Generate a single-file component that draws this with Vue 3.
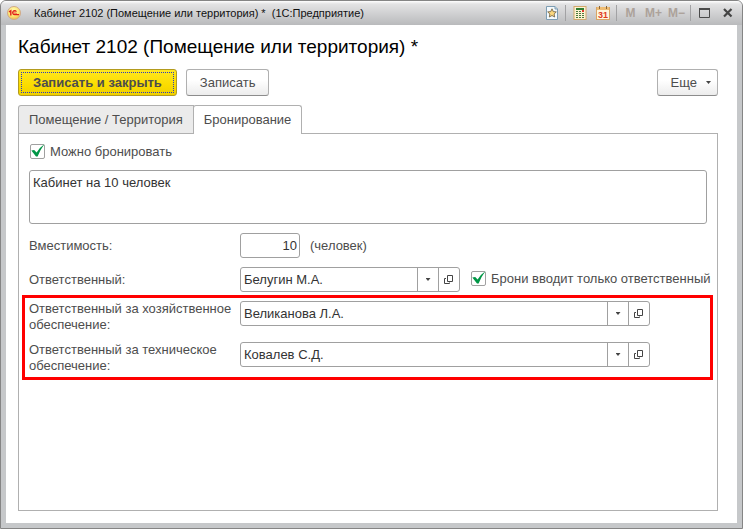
<script setup>
import { ref } from 'vue'

const canBook = ref(true)
const onlyResponsible = ref(true)
const description = ref('Кабинет на 10 человек')
const capacity = ref('10')
const responsible = ref('Белугин М.А.')
const extra = ref([
  { id: 'household', label: 'Ответственный за хозяйственное обеспечение:', value: 'Великанова Л.А.' },
  { id: 'technical', label: 'Ответственный за техническое обеспечение:', value: 'Ковалев С.Д.' },
])
</script>

<template>
  <div class="window">
    <header class="titlebar">
      <svg class="logo" width="14" height="14" viewBox="0 0 14 14" aria-hidden="true">
        <defs>
          <radialGradient id="logoFill" cx="0.45" cy="0.3" r="0.75">
            <stop offset="0" stop-color="#fffbb0" />
            <stop offset="0.6" stop-color="#fde570" />
            <stop offset="1" stop-color="#eab04c" />
          </radialGradient>
        </defs>
        <circle cx="7" cy="7" r="6.5" fill="url(#logoFill)" stroke="#d0a98a" />
        <path d="M2 5.8 L3.8 4.8 V9.4" fill="none" stroke="#e0201b" stroke-width="1.4" />
        <path d="M9.4 5.7 A2 2 0 1 0 7.6 8.7 H12" fill="none" stroke="#e0201b" stroke-width="1.2" />
        <path d="M8.4 6.4 A0.8 0.8 0 1 0 7.8 7.3 H10" fill="none" stroke="#e0201b" stroke-width="0.6" />
      </svg>
      <span class="caption">Кабинет 2102 (Помещение или территория) *&nbsp; (1С:Предприятие)</span>
      <div class="tools">
        <button class="tool" type="button" aria-label="Избранное">
          <svg width="14" height="14" viewBox="0 0 14 14">
            <path d="M1.5 0.5 H10 L12.5 3 V13.5 H1.5 Z" fill="#f4f9fc" stroke="#7d9db3" />
            <path d="M10 0.5 V3 H12.5" fill="#c9dbe6" stroke="#7d9db3" />
            <path d="M7 2.8 L8.3 5.6 L11.3 5.9 L9.1 8 L9.7 11 L7 9.5 L4.3 11 L4.9 8 L2.7 5.9 L5.7 5.6 Z" fill="#fbd77d" stroke="#77684c" stroke-width="0.9" />
          </svg>
        </button>
        <i class="divider"></i>
        <button class="tool" type="button" aria-label="Калькулятор">
          <svg width="14" height="14" viewBox="0 0 14 14">
            <rect x="1" y="0.5" width="12" height="13" fill="#fdf3d3" stroke="#d2a86c" />
            <rect x="3" y="2" width="8" height="2" fill="#2f7d31" />
            <g fill="#4b7a3c">
              <rect x="3" y="5" width="2" height="1" /><rect x="6" y="5" width="2" height="1" />
              <rect x="3" y="7" width="2" height="1" /><rect x="6" y="7" width="2" height="1" /><rect x="9" y="7" width="2" height="1" />
              <rect x="3" y="9" width="2" height="1" /><rect x="6" y="9" width="2" height="1" /><rect x="9" y="9" width="2" height="1" />
              <rect x="3" y="11" width="2" height="1" /><rect x="6" y="11" width="2" height="1" /><rect x="9" y="11" width="2" height="1" />
            </g>
            <rect x="9" y="4" width="2" height="2" fill="#e0392b" />
          </svg>
        </button>
        <button class="tool" type="button" aria-label="Календарь">
          <svg width="14" height="14" viewBox="0 0 14 14">
            <rect x="0.5" y="1.5" width="13" height="12" fill="#fff6df" stroke="#d9a566" />
            <rect x="1" y="1" width="12" height="3" fill="#efbd74" />
            <path d="M3.5 0 V3 M10.5 0 V3" stroke="#8a6437" />
            <text x="7" y="12" text-anchor="middle" font-family="Liberation Sans, sans-serif" font-size="9" font-weight="bold" fill="#e03a1e">31</text>
          </svg>
        </button>
        <i class="divider"></i>
        <button class="memory" type="button">M</button>
        <button class="memory" type="button">M+</button>
        <button class="memory" type="button">M−</button>
        <i class="divider"></i>
        <button class="tool" type="button" aria-label="Развернуть">
          <svg width="12" height="10" viewBox="0 0 12 10">
            <path d="M0.5 0 V9.5 H10.5 V0" fill="none" stroke="#4a4a4a" />
            <rect width="11" height="2" fill="#4a4a4a" />
          </svg>
        </button>
        <button class="tool" type="button" aria-label="Закрыть">
          <svg width="10" height="10" viewBox="0 0 10 10">
            <path d="M1 1 L8.5 8.5 M8.5 1 L1 8.5" stroke="#444" stroke-width="2.2" />
          </svg>
        </button>
      </div>
    </header>

    <main class="content">
      <h1>Кабинет 2102 (Помещение или территория) *</h1>
      <div class="commands">
        <button class="btn primary" type="button">Записать и закрыть</button>
        <button class="btn" type="button">Записать</button>
        <button class="btn more" type="button">Еще <i class="caret"></i></button>
      </div>

      <div class="tabs" role="tablist">
        <button class="tab" type="button" role="tab" aria-selected="false">Помещение / Территория</button>
        <button class="tab active" type="button" role="tab" aria-selected="true">Бронирование</button>
      </div>

      <section class="panel" role="tabpanel">
        <label class="check">
          <span class="box">
            <input v-model="canBook" type="checkbox" />
            <svg v-if="canBook" width="15" height="15" viewBox="0 0 15 15"><path d="M1.3 6.6 L4.2 6 L6.6 8.6 Q9.5 3.5 14.5 0 Q10 6 7.6 12.6 H6 Z" fill="#009646" /></svg>
          </span>
          Можно бронировать
        </label>
        <textarea v-model="description" aria-label="Описание"></textarea>

        <div class="row">
          <label class="name" for="capacity">Вместимость:</label>
          <input id="capacity" v-model="capacity" class="number" type="text" />
          <span class="unit">(человек)</span>
        </div>

        <div class="row">
          <label class="name" for="responsible">Ответственный:</label>
          <div class="field short">
            <input id="responsible" v-model="responsible" type="text" />
            <button type="button" aria-label="Выбрать"><i class="caret"></i></button>
            <button type="button" aria-label="Открыть">
              <svg width="10" height="10" viewBox="0 0 10 10"><path d="M3.5 0.5 H8.5 V6.5 H3.5 Z M2 3.5 H0.5 V8.5 H5.5 V7.5" fill="none" stroke="#444" /></svg>
            </button>
          </div>
          <label class="check">
            <span class="box">
              <input v-model="onlyResponsible" type="checkbox" />
              <svg v-if="onlyResponsible" width="15" height="15" viewBox="0 0 15 15"><path d="M1.3 6.6 L4.2 6 L6.6 8.6 Q9.5 3.5 14.5 0 Q10 6 7.6 12.6 H6 Z" fill="#009646" /></svg>
            </span>
            Брони вводит только ответственный
          </label>
        </div>

        <div class="highlighted">
          <div v-for="item in extra" :key="item.id" class="row tall">
            <label class="name" :for="item.id">{{ item.label }}</label>
            <div class="field">
              <input :id="item.id" v-model="item.value" type="text" />
              <button type="button" aria-label="Выбрать"><i class="caret"></i></button>
              <button type="button" aria-label="Открыть">
                <svg width="10" height="10" viewBox="0 0 10 10"><path d="M3.5 0.5 H8.5 V6.5 H3.5 Z M2 3.5 H0.5 V8.5 H5.5 V7.5" fill="none" stroke="#444" /></svg>
              </button>
            </div>
          </div>
        </div>
      </section>
    </main>
  </div>
</template>

<style>
body {
  background: #fff;
}
</style>

<style scoped>
* {
  box-sizing: border-box;
}

button,
input,
textarea {
  margin: 0;
  font: inherit;
  color: inherit;
}

.window {
  display: flex;
  flex-direction: column;
  min-height: 100vh;
  padding: 0 5px 5px;
  border: 1px solid #858585;
  border-radius: 6px 6px 0 0;
  background: #c6c8ca;
  font-family: "Liberation Sans", Arial, sans-serif;
  font-size: 13px;
  line-height: 16px;
  color: #4d4d4d;
}

.titlebar {
  display: flex;
  align-items: center;
  height: 24px;
  margin: 0 -5px;
  padding: 0 3px 0 6px;
  border-radius: 5px 5px 0 0;
  background: linear-gradient(#fff 0, #e3e3e4 3px, #b9babc 100%);
}

.logo {
  flex: none;
}

.caption {
  margin-left: 13px;
  font-size: 11px;
  color: #111;
  white-space: nowrap;
}

.tools {
  display: flex;
  align-items: center;
  margin-left: auto;
}

.tool,
.memory {
  display: flex;
  align-items: center;
  justify-content: center;
  width: 23px;
  height: 20px;
  padding: 0;
  border: 0;
  background: none;
}

.memory {
  font-size: 12px;
  font-weight: bold;
  color: #aca29a;
}

.divider {
  width: 1px;
  height: 16px;
  margin: 0 2px;
  background: #a2a2a4;
}

.content {
  display: flex;
  flex: 1;
  flex-direction: column;
  padding: 10px 19px 12px 12px;
  background: #fff;
}

h1 {
  margin: 0;
  font-size: 19px;
  font-weight: normal;
  line-height: 24px;
  color: #000;
}

.commands {
  display: flex;
  gap: 9px;
  margin-top: 10px;
}

.btn {
  height: 27px;
  padding: 0 13px;
  border: 1px solid #b0b0b0;
  border-bottom-color: #8c8c8c;
  border-radius: 3px;
  background: linear-gradient(#fff 40%, #ececec);
}

.primary {
  padding: 0 14px;
  border-color: #b39b1e;
  background: linear-gradient(#ffe81f, #fbdc00 60%, #efd000);
  outline: 1px dotted #2a3cc0;
  outline-offset: -4px;
  font-weight: bold;
}

.more {
  display: flex;
  align-items: center;
  gap: 9px;
  margin-left: auto;
  padding: 0 6px 0 13px;
}

.caret {
  width: 5px;
  height: 3px;
  background: #444;
  clip-path: polygon(0 0, 100% 0, 50% 100%);
}

.tabs {
  display: flex;
  margin-top: 9px;
}

.tab {
  height: 28px;
  padding: 0 10px;
  border: 1px solid #b0b0b0;
  border-bottom: 0;
  border-radius: 3px 0 0 0;
  background: #ebebeb;
}

.active {
  height: 29px;
  margin: 0 0 -1px -1px;
  border-radius: 3px 3px 0 0;
  background: #fff;
  z-index: 1;
}

.panel {
  display: flex;
  flex: 1;
  flex-direction: column;
  gap: 9px;
  padding: 10px 10px 20px;
  border: 1px solid #b0b0b0;
}

.check {
  display: flex;
  align-items: flex-start;
  gap: 5px;
  height: 17px;
  white-space: nowrap;
}

.box {
  position: relative;
  width: 16px;
  height: 16px;
}

.box input {
  display: block;
  width: 15px;
  height: 15px;
  margin: 0 1px;
  border: 1px solid #a0a0a0;
  border-radius: 2px;
  appearance: none;
}

.box svg {
  position: absolute;
  top: 0;
  left: 1px;
  pointer-events: none;
}

textarea {
  display: block;
  width: 100%;
  height: 54px;
  padding: 4px 3px;
  border: 1px solid #a0a0a0;
  border-radius: 3px;
  color: #333;
  resize: none;
}

.row {
  display: flex;
  align-items: center;
  min-height: 25px;
}

.name {
  flex: none;
  width: 211px;
}

.number {
  width: 60px;
  height: 25px;
  padding: 0 2px;
  border: 1px solid #a0a0a0;
  border-radius: 3px;
  color: #333;
  text-align: right;
}

.unit {
  margin-left: 10px;
}

.field {
  display: flex;
  width: 410px;
  height: 25px;
  border: 1px solid #a0a0a0;
  border-radius: 3px;
}

.short {
  width: 220px;
  margin-right: 10px;
}

.field input {
  flex: 1;
  min-width: 0;
  padding: 0 3px;
  border: 0;
  background: none;
  color: #333;
}

.field button {
  display: flex;
  align-items: center;
  justify-content: center;
  width: 21px;
  padding: 0;
  border: 0;
  border-left: 1px solid #a0a0a0;
  background: none;
}

.highlighted {
  position: relative;
  display: flex;
  flex-direction: column;
  gap: 9px;
}

.highlighted::after {
  content: "";
  position: absolute;
  inset: -6px -6px -6px -7px;
  border: 3px solid #f00;
  pointer-events: none;
}

.tall {
  align-items: flex-start;
}
</style>
